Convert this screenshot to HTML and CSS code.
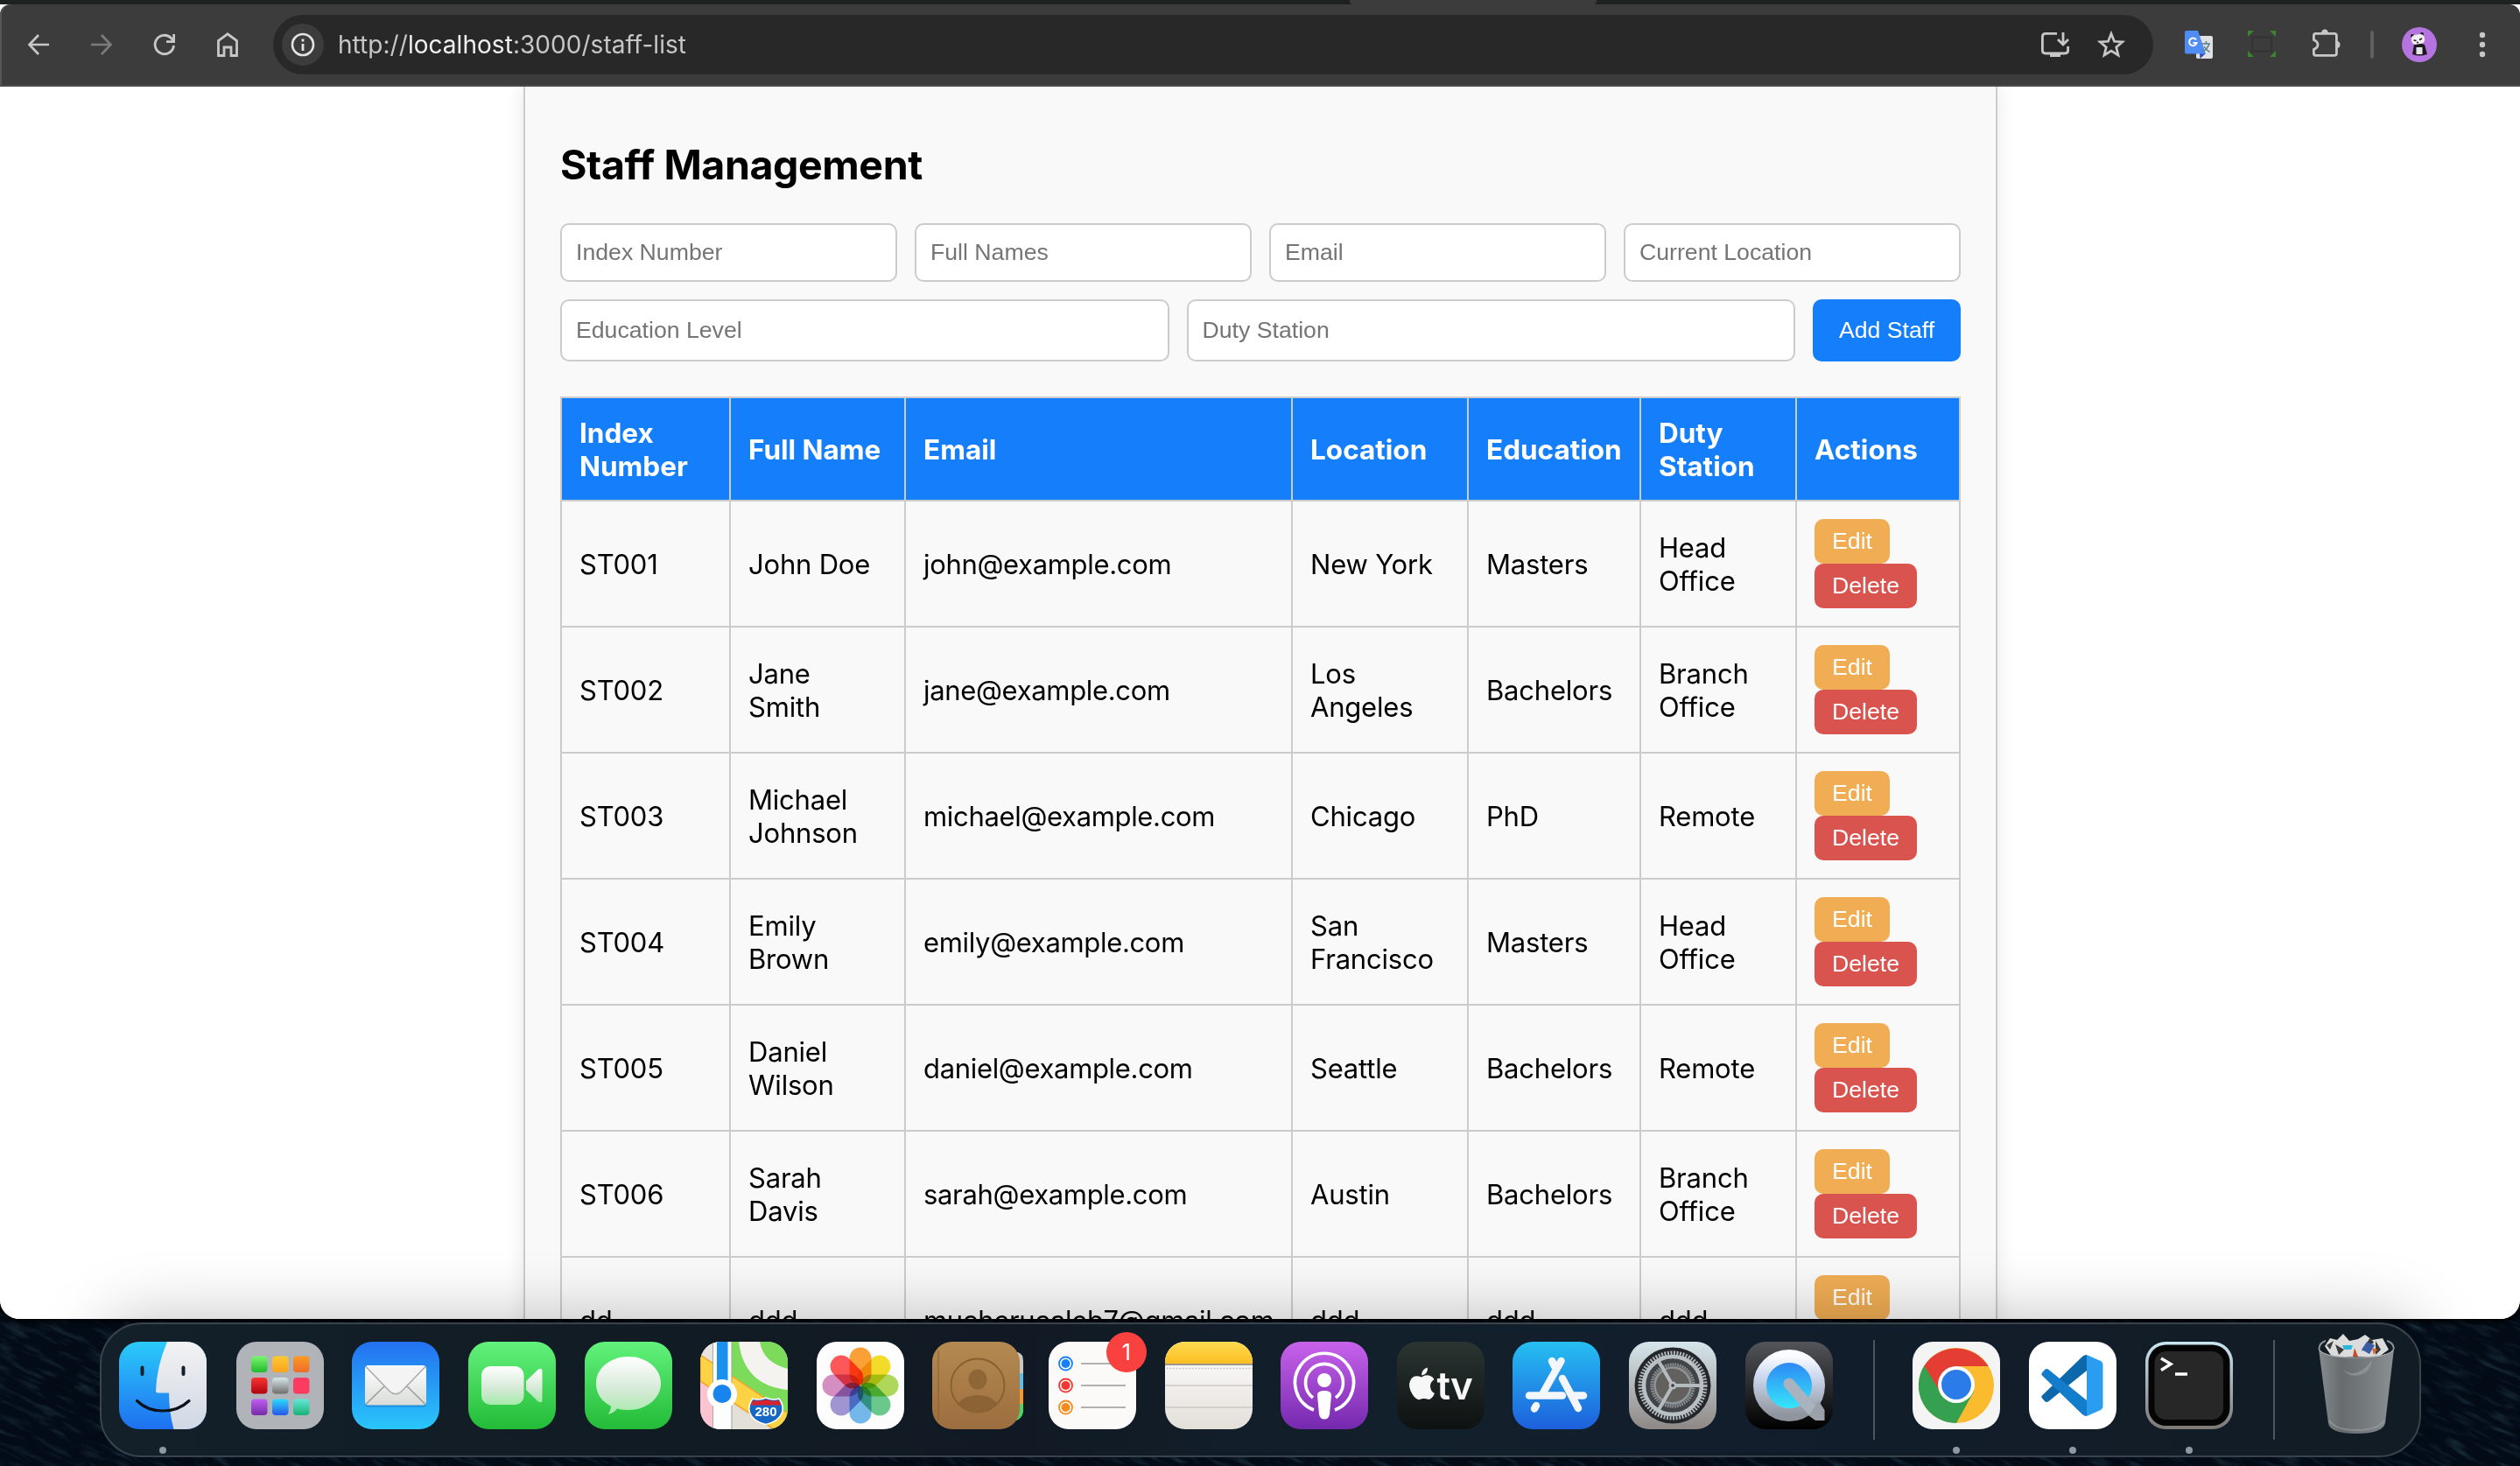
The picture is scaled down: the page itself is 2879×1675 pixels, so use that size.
FILE: index.html
```html
<!DOCTYPE html>
<html lang="en">
<head>
<meta charset="utf-8">
<title>Staff Management</title>
<link rel="stylesheet" href="styles.css">
</head>
<body>
<svg class="wallpaper" width="2879" height="175" viewBox="0 0 2879 175">
  <defs>
    <filter id="waves" x="0" y="0" width="100%" height="100%">
      <feTurbulence type="fractalNoise" baseFrequency="0.03 0.16" numOctaves="4" seed="8"/>
      <feColorMatrix values="0 0 0 0 .12  0 0 0 0 .28  0 0 0 0 .38  1.6 1.2 0 0 -1.35"/>
    </filter>
  </defs>
  <g transform="rotate(24 1440 87)"><rect x="-200" y="-800" width="3300" height="1800" filter="url(#waves)" opacity=".26"/></g>
</svg>

<div class="window">
  <div class="tabstrip"><div class="active-tab"></div></div>
  <div class="toolbar">
    <svg class="tool" viewBox="24 31 40 40"><path d="M56 51H34M44 40L33.500 51L44 62" fill="none" stroke="#c7c7c7" stroke-width="2.700"/></svg>
    <svg class="tool" viewBox="96 31 40 40"><path d="M104 51H126M116 40L126.500 51L116 62" fill="none" stroke="#7b7b7b" stroke-width="2.700"/></svg>
    <svg class="tool" viewBox="168 31 40 40"><path d="M198.500 52A10.700 10.700 0 1 1 195.500 43.500L198 46.500M198.600 39V47.600H190" fill="none" stroke="#c7c7c7" stroke-width="2.800"/></svg>
    <svg class="tool" viewBox="240 31 40 40"><path d="M249.500 63.500V46.500L260 38.800L270.500 46.500V63.500H264V54H256V63.500Z" fill="none" stroke="#c7c7c7" stroke-width="2.800"/></svg>
    <div class="omnibox">
      <div class="site-info"><svg viewBox="322 27 48 48"><circle cx="346" cy="51" r="12" fill="none" stroke="#e3e3e3" stroke-width="2.600"/><path d="M346 50V58M346 44.500V47.500" stroke="#e3e3e3" stroke-width="2.800"/></svg></div>
      <div class="url">http://<b>localhost</b>:3000/staff-list</div>
      <svg class="tool" viewBox="2328 31 40 40"><path d="M2350 38.400H2337Q2333.400 38.400 2333.400 42V57.500Q2333.400 61 2337 61H2359Q2362.600 61 2362.600 57.500V53" fill="none" stroke="#c7c7c7" stroke-width="2.800"/><path d="M2342 61H2354V65H2342Z" fill="#c7c7c7"/><path d="M2357 37V50M2351 45L2357 51L2363 45" fill="none" stroke="#c7c7c7" stroke-width="2.800"/></svg>
      <svg class="tool" viewBox="2392 31 40 40"><path d="M2412 38.500L2415.500 47.300L2424.800 47.900L2417.700 53.900L2420 63L2412 58L2404 63L2406.300 53.900L2399.200 47.900L2408.500 47.300Z" fill="none" stroke="#c7c7c7" stroke-width="2.700"/></svg>
    </div>
    <svg class="tool" viewBox="2492 31 40 40">
      <rect x="2509" y="41" width="19" height="26" rx="2" fill="#dfe1e3"/>
      <path d="M2513 61H2520L2513.500 67Z" fill="#3449b5"/>
      <path d="M2498 35H2511L2520 61.500H2498Q2496 61.500 2496 59.500V37Q2496 35 2498 35Z" fill="#4f8df5"/>
      <path d="M2509 45.500A4.300 4.300 0 1 0 2509.600 49H2505.500" fill="none" stroke="#fff" stroke-width="2"/>
      <path d="M2516 50H2525M2520.500 47V50M2524 50Q2522 56 2516.500 59M2518 53Q2520 57 2524.500 59.500" fill="none" stroke="#5b7f8c" stroke-width="1.500"/>
    </svg>
    <svg class="tool" viewBox="2564 31 40 40"><rect x="2573" y="42.500" width="22" height="16" fill="#3c3c3c" stroke="#343434" stroke-width="2.500"/><path d="M2568 35h7l-7 7zM2600 35v7l-7-7zM2568 65v-7l7 7zM2600 65h-7l7-7z" fill="#39852f"/></svg>
    <svg class="tool" viewBox="2636 31 40 40"><path d="M2643.400 40.500Q2643.400 38.400 2645.500 38.400H2667Q2669.400 38.400 2669.400 40.500V61Q2669.400 63.400 2667 63.400H2645.500Q2643.400 63.400 2643.400 61V56.500Q2648 54.500 2648 51Q2648 47.500 2643.400 45.500Z" fill="none" stroke="#c7c7c7" stroke-width="2.800"/><path d="M2652 38a4 4.500 0 0 1 8 0zM2669.500 47a4 4 0 0 1 0 8z" fill="#c7c7c7"/></svg>
    <div class="divider"></div>
    <svg class="tool avatar" viewBox="2744 31 40 40"><circle cx="2764" cy="51" r="20" fill="#b674e0"/><path d="M2758 51Q2764 48 2770 51L2773 62Q2764 65 2756 62Z" fill="#1c191d"/><path d="M2760.500 54h7v8h-7z" fill="#e9e4ea"/><circle cx="2756" cy="41" r="2" fill="#1c191d"/><circle cx="2767" cy="39" r="2" fill="#1c191d"/><rect x="2755" y="39.500" width="15" height="11" rx="4.500" fill="#f1eef2" transform="rotate(-10 2762 45)"/><path d="M2757.500 46l3 .5M2764 45.500l3-1.500M2761 48.500h2" stroke="#1c191d" stroke-width="1.400"/></svg>
    <svg class="tool" viewBox="2816 31 40 40"><g fill="#c7c7c7"><circle cx="2836" cy="40" r="3.200"/><circle cx="2836" cy="51" r="3.200"/><circle cx="2836" cy="62" r="3.200"/></g></svg>
  </div>

  <main class="viewport">
    <section class="panel">
      <h2>Staff Management</h2>
      <form class="staff-form">
        <input placeholder="Index Number"><input placeholder="Full Names"><input placeholder="Email"><input placeholder="Current Location">
        <input class="tall" placeholder="Education Level"><input class="tall" placeholder="Duty Station"><button type="button" class="add">Add Staff</button>
      </form>
      <table>
        <colgroup><col class="c1"><col class="c2"><col class="c3"><col class="c4"><col class="c5"><col class="c6"><col class="c7"></colgroup>
        <thead><tr><th>Index Number</th><th>Full Name</th><th>Email</th><th>Location</th><th>Education</th><th>Duty Station</th><th>Actions</th></tr></thead>
        <tbody>
          <tr><td>ST001</td><td>John Doe</td><td class="email">john@example.com</td><td>New York</td><td>Masters</td><td>Head Office</td><td class="actions"><button class="edit">Edit</button><button class="delete">Delete</button></td></tr>
          <tr><td>ST002</td><td>Jane Smith</td><td class="email">jane@example.com</td><td>Los Angeles</td><td>Bachelors</td><td>Branch Office</td><td class="actions"><button class="edit">Edit</button><button class="delete">Delete</button></td></tr>
          <tr><td>ST003</td><td>Michael Johnson</td><td class="email">michael@example.com</td><td>Chicago</td><td>PhD</td><td>Remote</td><td class="actions"><button class="edit">Edit</button><button class="delete">Delete</button></td></tr>
          <tr><td>ST004</td><td>Emily Brown</td><td class="email">emily@example.com</td><td>San Francisco</td><td>Masters</td><td>Head Office</td><td class="actions"><button class="edit">Edit</button><button class="delete">Delete</button></td></tr>
          <tr><td>ST005</td><td>Daniel Wilson</td><td class="email">daniel@example.com</td><td>Seattle</td><td>Bachelors</td><td>Remote</td><td class="actions"><button class="edit">Edit</button><button class="delete">Delete</button></td></tr>
          <tr><td>ST006</td><td>Sarah Davis</td><td class="email">sarah@example.com</td><td>Austin</td><td>Bachelors</td><td>Branch Office</td><td class="actions"><button class="edit">Edit</button><button class="delete">Delete</button></td></tr>
          <tr><td>dd</td><td>ddd</td><td class="email">mucherucaleb7@gmail.com</td><td>ddd</td><td>ddd</td><td>ddd</td><td class="actions"><button class="edit">Edit</button><button class="delete">Delete</button></td></tr>
        </tbody>
      </table>
    </section>
    <div class="dock-shadow"></div>
  </main>
</div>

<svg width="0" height="0" class="defs">
  <defs>
    <clipPath id="sq"><rect width="100" height="100" rx="23"/></clipPath>
    <linearGradient id="blueF" x2="0" y2="1"><stop stop-color="#2bcbfa"/><stop offset="1" stop-color="#1e6ff0"/></linearGradient>
    <linearGradient id="whiteF" x2="0" y2="1"><stop stop-color="#f3f2f3"/><stop offset="1" stop-color="#cfd8e4"/></linearGradient>
    <linearGradient id="mailG" x2="0" y2="1"><stop stop-color="#2371f1"/><stop offset="1" stop-color="#2ac6fb"/></linearGradient>
    <linearGradient id="greenG" x2="0" y2="1"><stop stop-color="#62f27c"/><stop offset="1" stop-color="#23bb37"/></linearGradient>
    <linearGradient id="paper" x2="0" y2="1"><stop stop-color="#fff"/><stop offset="1" stop-color="#d9dcd9"/></linearGradient>
    <linearGradient id="bubble" x2="0" y2="1"><stop stop-color="#fff"/><stop offset=".6" stop-color="#d3e9d4"/><stop offset="1" stop-color="#a6ebaa"/></linearGradient>
    <linearGradient id="brown" x2="0" y2="1"><stop stop-color="#b58a51"/><stop offset="1" stop-color="#9c6d3e"/></linearGradient>
    <linearGradient id="yel" x2="0" y2="1"><stop stop-color="#fedb50"/><stop offset="1" stop-color="#fbbf22"/></linearGradient>
    <linearGradient id="cream" x2="0" y2="1"><stop stop-color="#fff"/><stop offset="1" stop-color="#e3dfd9"/></linearGradient>
    <linearGradient id="purp" x2="0" y2="1"><stop stop-color="#c862ec"/><stop offset="1" stop-color="#7429ae"/></linearGradient>
    <linearGradient id="tvG" x2="0" y2="1"><stop stop-color="#2a3532"/><stop offset="1" stop-color="#0e1111"/></linearGradient>
    <linearGradient id="storeG" x2="0" y2="1"><stop stop-color="#26bff2"/><stop offset="1" stop-color="#1d5fdc"/></linearGradient>
    <linearGradient id="setG" x2="0" y2="1"><stop stop-color="#d6e6ec"/><stop offset="1" stop-color="#8e8885"/></linearGradient>
    <linearGradient id="qtBg" x2="0" y2="1"><stop stop-color="#53555a"/><stop offset="1" stop-color="#000"/></linearGradient>
    <linearGradient id="qtRing" x2="0" y2="1"><stop stop-color="#fbfcff"/><stop offset=".35" stop-color="#cdd8ef"/><stop offset="1" stop-color="#8f959e"/></linearGradient>
    <linearGradient id="qtIn" x2="0" y2="1"><stop stop-color="#2d7bf3"/><stop offset="1" stop-color="#38f3fb"/></linearGradient>
    <linearGradient id="termG" x2="0" y2="1"><stop stop-color="#c9e6f2"/><stop offset="1" stop-color="#7d7774"/></linearGradient>
    <linearGradient id="bin" x2="1"><stop stop-color="#8f9497"/><stop offset=".3" stop-color="#6d7174"/><stop offset=".65" stop-color="#7e8386"/><stop offset="1" stop-color="#94989a"/></linearGradient>
    <linearGradient id="t1" x2="0" y2="1"><stop stop-color="#7df56e"/><stop offset="1" stop-color="#1fbb2c"/></linearGradient>
    <linearGradient id="t2" x2="0" y2="1"><stop stop-color="#fcc931"/><stop offset="1" stop-color="#fba21c"/></linearGradient>
    <linearGradient id="t3" x2="0" y2="1"><stop stop-color="#fa9a23"/><stop offset="1" stop-color="#ef6c2a"/></linearGradient>
    <linearGradient id="t4" x2="0" y2="1"><stop stop-color="#f93431"/><stop offset="1" stop-color="#b10410"/></linearGradient>
    <linearGradient id="t5" x2="0" y2="1"><stop stop-color="#d8e8ee"/><stop offset="1" stop-color="#6f6d6c"/></linearGradient>
    <linearGradient id="t7" x2="0" y2="1"><stop stop-color="#c15ef0"/><stop offset="1" stop-color="#752bab"/></linearGradient>
    <linearGradient id="t8" x2="0" y2="1"><stop stop-color="#2edafb"/><stop offset="1" stop-color="#2456ea"/></linearGradient>
    <linearGradient id="t9" x2="0" y2="1"><stop stop-color="#66e6d8"/><stop offset="1" stop-color="#17b177"/></linearGradient>
  </defs>
</svg>

<nav class="dock">
  <div class="app running finder"><svg viewBox="0 0 100 100"><g clip-path="url(#sq)"><rect width="100" height="100" fill="url(#blueF)"/><path d="M55 0Q43 28 42 56Q42 58.500 44.500 58.500H57Q57 80 62.500 100H100V0Z" fill="url(#whiteF)"/></g><path d="M26.500 29.500V37M73.500 29.500V37" stroke="#12202c" stroke-width="4" stroke-linecap="round"/><path d="M20.500 67.500Q32 79 50 79T80 67.500" fill="none" stroke="#0c1219" stroke-width="3.200" stroke-linecap="round"/></svg></div>
  <div class="app"><svg viewBox="0 0 100 100"><rect width="100" height="100" rx="23" fill="#b0b4b8"/><rect x="17" y="16.500" width="18.500" height="18.500" rx="4" fill="url(#t1)"/><rect x="41" y="16.500" width="18.500" height="18.500" rx="4" fill="url(#t2)"/><rect x="65" y="16.500" width="18.500" height="18.500" rx="4" fill="url(#t3)"/><rect x="17" y="41" width="18.500" height="18.500" rx="4" fill="url(#t4)"/><rect x="41" y="41" width="18.500" height="18.500" rx="4" fill="url(#t5)"/><rect x="65" y="41" width="18.500" height="18.500" rx="4" fill="#fb3c60"/><rect x="17" y="65.500" width="18.500" height="18.500" rx="4" fill="url(#t7)"/><rect x="41" y="65.500" width="18.500" height="18.500" rx="4" fill="url(#t8)"/><rect x="65" y="65.500" width="18.500" height="18.500" rx="4" fill="url(#t9)"/></svg></div>
  <div class="app"><svg viewBox="0 0 100 100"><rect width="100" height="100" rx="23" fill="url(#mailG)"/><rect x="15" y="28.500" width="70" height="46" rx="4" fill="#0d4fb0" opacity=".35"/><rect x="15" y="27" width="70" height="45.500" rx="4" fill="url(#paper)"/><path d="M16.500 71L37 51M83.500 71L63 51" stroke="#9b9b9b" stroke-width="1.500"/><path d="M16 28.500L43 56.500Q50 63 57 56.500L84 28.500" fill="#f4f4f4" stroke="#a9a9a9" stroke-width="1.500"/></svg></div>
  <div class="app"><svg viewBox="0 0 100 100"><rect width="100" height="100" rx="23" fill="url(#greenG)"/><rect x="15" y="28" width="48.500" height="44" rx="10" fill="url(#bubble)"/><path d="M66 45L80 31.500Q84.500 29 84.500 34V66Q84.500 71 80 68.500L66 55Z" fill="url(#bubble)"/></svg></div>
  <div class="app"><svg viewBox="0 0 100 100"><rect width="100" height="100" rx="23" fill="url(#greenG)"/><path d="M50 17C71 17 87 30.500 87 47.500S71 78 50 78Q43 78 37 76.500Q33 81.500 26.500 83Q30 78.500 30 73.500Q13 65 13 47.500C13 30.500 29 17 50 17Z" fill="url(#bubble)"/></svg></div>
  <div class="app"><svg viewBox="0 0 100 100"><g clip-path="url(#sq)"><rect width="100" height="100" fill="#e3e0d8"/><path d="M36 0H100V84L36 40Z" fill="#7ddb5c"/><path d="M44 0Q50 50 100 55V31Q72 24 68 0Z" fill="#f4f3ef"/><path d="M0 0H14V26L0 15Z" fill="#e7e5e0"/><path d="M0 46L14 52V100H0Z" fill="#fcc3d0"/><path d="M0 15L100 82V100H84L0 45Z" fill="#fcd344" stroke="#f5a42b" stroke-width="1.500"/><rect x="14.500" width="21" height="100" fill="#fdfdfd"/><path d="M14.500 0V100M36 0V100" stroke="#a9a9a0" stroke-width="1"/><rect x="19" width="12.500" height="50" fill="#1a91ee"/></g><circle cx="25" cy="60" r="17" fill="#fff"/><circle cx="25" cy="59.500" r="10.500" fill="#1884ee"/><path d="M60 65Q67 67.500 75 64Q83 67.500 90 65Q96 73 93.500 81Q90 91 75 94.500Q60 91 56.500 81Q54 73 60 65Z" fill="#1768c4" stroke="#fff" stroke-width="1.600"/><path d="M60 67Q67 69 75 66Q83 69 90 67L92.500 72.500H57.500Z" fill="#d8232d"/><text x="75" y="85" class="route">280</text></svg></div>
  <div class="app"><svg viewBox="0 0 100 100"><rect width="100" height="100" rx="23" fill="#fdfdfd"/><g class="petals"><rect x="37.500" y="6.500" width="25" height="43" rx="12.500" fill="#fb9a2c"/><rect x="37.500" y="6.500" width="25" height="43" rx="12.500" fill="#f3da1d" transform="rotate(45 50 50)"/><rect x="37.500" y="6.500" width="25" height="43" rx="12.500" fill="#abd651" transform="rotate(90 50 50)"/><rect x="37.500" y="6.500" width="25" height="43" rx="12.500" fill="#62c587" transform="rotate(135 50 50)"/><rect x="37.500" y="6.500" width="25" height="43" rx="12.500" fill="#6bb3ea" transform="rotate(180 50 50)"/><rect x="37.500" y="6.500" width="25" height="43" rx="12.500" fill="#9c8ed1" transform="rotate(225 50 50)"/><rect x="37.500" y="6.500" width="25" height="43" rx="12.500" fill="#d289bd" transform="rotate(270 50 50)"/><rect x="37.500" y="6.500" width="25" height="43" rx="12.500" fill="#fd4f50" transform="rotate(315 50 50)"/></g></svg></div>
  <div class="app"><svg viewBox="0 0 100 100"><path d="M90 12H98Q104 14 104 22V36H90Z" fill="#c9c7c3"/><path d="M90 36H104V54H90Z" fill="#5bbdf0"/><path d="M90 54H104V71H90Z" fill="#f79a2b"/><path d="M90 71H104V80Q103 88 94 91H90Z" fill="#4cd364"/><rect width="100" height="100" rx="23" fill="url(#brown)"/><path d="M7 10V90" stroke="#8c6436" stroke-width="1.200"/><g stroke="#86602f" stroke-width="1.800"><circle cx="52" cy="50" r="30.500" fill="none"/><path d="M30 71Q36 61 52 61T74 71Q65 80.500 52 80.500T30 71Z" fill="#8c6335" stroke="none"/><ellipse cx="52" cy="43" rx="10.500" ry="11.500" fill="#8f6737" stroke="none"/></g></svg></div>
  <div class="app"><svg viewBox="0 0 100 100"><rect width="100" height="100" rx="23" fill="#fbfaf8"/><g fill="none" stroke-width="1.800"><circle cx="19.500" cy="25" r="7.500" stroke="#187ff5"/><circle cx="19.500" cy="50" r="7.500" stroke="#f23733"/><circle cx="19.500" cy="75" r="7.500" stroke="#f28c1d"/></g><circle cx="19.500" cy="25" r="5" fill="#187ff5"/><circle cx="19.500" cy="50" r="5" fill="#f23733"/><circle cx="19.500" cy="75" r="5" fill="#f28c1d"/><path d="M37 25H88M37 50H88M37 75H88" stroke="#b1b1b4" stroke-width="1.800"/></svg><span class="badge">1</span></div>
  <div class="app"><svg viewBox="0 0 100 100"><g clip-path="url(#sq)"><rect width="100" height="100" fill="url(#cream)"/><rect width="100" height="25" fill="url(#yel)"/><path d="M0 26H100" stroke="#9d968b" stroke-width="2"/><path d="M2 30.500H100" stroke="#c2bfbb" stroke-width="1.600" stroke-dasharray="1.600 2"/><path d="M0 50H100M0 75H100" stroke="#cbc9c8" stroke-width="1.600"/></g></svg></div>
  <div class="app"><svg viewBox="0 0 100 100"><rect width="100" height="100" rx="23" fill="url(#purp)"/><g fill="none" stroke="#fff" stroke-width="3.600"><path d="M38 78A33.500 33.500 0 1 1 62 78"/><path d="M37 64A21.500 21.500 0 1 1 63 64"/></g><circle cx="50" cy="44" r="8" fill="#fff"/><path d="M42 61Q42 56 50 56T58 61L56 83Q55 88.500 50 88.500T44 83Z" fill="#fff"/></svg></div>
  <div class="app"><svg viewBox="0 0 100 100"><rect width="100" height="100" rx="23" fill="url(#tvG)"/><path d="M28 40.500Q33 37 38 39Q41 40 42.500 43Q38 46 38 51Q38.500 57 43 59Q40 66 36 66Q33 64.500 29 65Q26 66.500 24 66Q19 64 15.500 56Q12 47 17 41.500Q21 37.500 28 40.500ZM28 38.500Q28 31.500 35 29.500Q35.500 37 28 38.500Z" fill="#f7f7f7"/><text x="45.500" y="66" class="tv">tv</text></svg></div>
  <div class="app"><svg viewBox="0 0 100 100"><rect width="100" height="100" rx="23" fill="url(#storeG)"/><g stroke="#f3f7fc" stroke-width="8.500" stroke-linecap="round"><path d="M45 22L48 28M19 61.500H57M68 61.500H81M57 42L75 76M27 73L25 76.500M55.500 22L34 60"/></g></svg></div>
  <div class="app"><svg viewBox="0 0 100 100"><rect width="100" height="100" rx="23" fill="url(#setG)"/><circle cx="50" cy="50" r="43.500" fill="#23262a"/><circle cx="50" cy="50" r="37" fill="none" stroke="#aeb5b8" stroke-width="5" stroke-dasharray="2 1.500"/><circle cx="50" cy="50" r="33" fill="#41454a" stroke="#b9c0c3" stroke-width="4.500"/><circle cx="50" cy="50" r="24" fill="#55585b" stroke="#8d9294" stroke-width="3.500" stroke-dasharray="1.600 1.200"/><circle cx="50" cy="50" r="20.500" fill="#63615e" stroke="#8f9496" stroke-width="2.500"/><path d="M50 50H82M50 50L34 22.500M50 50L34 77.500" stroke="#b5bcbf" stroke-width="4"/><circle cx="50" cy="50" r="4.500" fill="#b5bcbf"/><circle cx="50" cy="50" r="1.800" fill="#333"/></svg></div>
  <div class="app"><svg viewBox="0 0 100 100"><rect width="100" height="100" rx="23" fill="url(#qtBg)"/><circle cx="50" cy="50" r="33.500" fill="url(#qtIn)" stroke="url(#qtRing)" stroke-width="15"/><path d="M50 48L76 78" stroke="#a9b2bf" stroke-width="13" stroke-linecap="round"/><path d="M72 84L84 68L90.500 78V90H80Z" fill="#9ba1a9"/></svg></div>
  <div class="rule"></div>
  <div class="app running"><svg viewBox="0 0 100 100"><rect width="100" height="100" rx="23" fill="#f4f4f5"/><circle cx="50" cy="50" r="43" fill="#fabb2e"/><path d="M50 50L13.500 27A43 43 0 0 0 50 93L70 57Z" fill="#35a150"/><path d="M13.500 27.500A43 43 0 0 1 86.500 28H50V50L31 57Z" fill="#e43e34"/><circle cx="50" cy="49" r="21" fill="#fff"/><circle cx="50" cy="49" r="17" fill="#2b7be9"/></svg></div>
  <div class="app running"><svg viewBox="0 0 100 100"><rect width="100" height="100" rx="23" fill="#fff"/><path d="M66 15V33L22 68.500Q20 69.500 18 68L15 64.500Q13.500 62.500 15.500 61L61 17Q63 15 66 15Z" fill="#0c68ab"/><path d="M66 85V67L22 31.500Q20 30.500 18 32L15 35.500Q13.500 37.500 15.500 39L61 83Q63 85 66 85Z" fill="#137ccb"/><path d="M66 15L82 22Q84.500 23.500 84.500 26V74Q84.500 76.500 82 78L66 85Z" fill="#2b9df0"/></svg></div>
  <div class="app running"><svg viewBox="0 0 100 100"><rect width="100" height="100" rx="23" fill="url(#termG)"/><rect x="3.500" y="3.500" width="93" height="92.500" rx="20" fill="#050505"/><rect x="10.500" y="11" width="78.500" height="78" rx="13" fill="#272727"/><path d="M18 19L29 25.500L18 32.500M34 37H48" fill="none" stroke="#fff" stroke-width="3.400"/></svg></div>
  <div class="rule"></div>
  <div class="trash"><svg viewBox="0 0 90 118"><path d="M8 16L14 7L22 9L29 2L36 10L46 8L54 3L62 9L74 7L81 20L70 28H16Z" fill="#dcdcdc"/><path d="M20 14L30 20L24 26ZM50 22L60 6L64 12ZM66 10L72 20L66 26ZM10 15L18 10L14 20Z" fill="#3a3a3d"/><path d="M28 15H40L38 20H30Z" fill="#2bb5dc"/><path d="M56 11L65 15L59 25L50 20Z" fill="#3b5ba5"/><path d="M42 18L46 28L40 28Z" fill="#c94a2b"/><path d="M62 18L68 20L64 26Z" fill="#d0642c"/><path d="M1 19Q5 29 44 29T87 19L77 104Q74 116 44 116T12 104Z" fill="url(#bin)" opacity=".93"/><path d="M1.500 19Q2 12 9 10M87 19Q86 12 79 10" fill="none" stroke="#8a9094" stroke-width="2"/><path d="M1 19Q5 29 44 29T87 19" fill="none" stroke="#a9adaf" stroke-width="1.200"/><path d="M28 42Q44 56 62 32Q60 46 48 49T28 42Z" fill="#a3a7aa" opacity=".5"/><path d="M13 101Q20 112 44 112T76 101" fill="none" stroke="#a5a9ab" stroke-width="2" opacity=".5"/></svg></div>
</nav>
</body>
</html>
```
FILE: styles.css
```css
* { box-sizing: border-box; }
body {
  margin: 0;
  width: 2879px;
  height: 1675px;
  overflow: hidden;
  position: relative;
  background: #020b16;
  font-family: Inter, "Liberation Sans", sans-serif;
}
.defs { position: absolute; }
.wallpaper { position: absolute; left: 0; bottom: 0; }

.window {
  position: relative;
  width: 2879px;
  height: 1507px;
  border-radius: 0 0 22px 22px;
  overflow: hidden;
  background: #fff;
  box-shadow: 0 0 6px 3px #000;
}
.tabstrip { height: 5px; background: #1e2120; }
.active-tab { width: 282px; height: 5px; margin-left: 1542px; background: #3c3c3c; border-radius: 0 0 4px 4px; }
.toolbar {
  height: 94px;
  display: flex;
  align-items: center;
  gap: 32px;
  padding-left: 24px;
  background: #3c3c3c;
  border-bottom: 2px solid #4a4a4a;
  border-radius: 12px 12px 0 0;
  box-shadow: inset 2px 0 0 #555;
}
.tool { width: 40px; height: 40px; flex: none; display: block; }
.omnibox {
  width: 2148px;
  height: 68px;
  flex: none;
  display: flex;
  align-items: center;
  padding: 0 28px 0 10px;
  gap: 24px;
  border-radius: 34px;
  background: #282828;
}
.site-info { width: 48px; height: 48px; border-radius: 50%; background: #3c3c3c; }
.site-info svg { display: block; width: 48px; height: 48px; }
.url { flex: 1; margin-left: -8px; font-size: 28px; line-height: 40px; letter-spacing: .04px; color: #c7c7c7; }
.url b { font-weight: 400; color: #f0f0f0; }
.divider { width: 4px; height: 32px; border-radius: 2px; background: #5f5f5f; }

.viewport { height: 1408px; position: relative; overflow: hidden; background: #fff; }
.panel {
  width: 1684px;
  height: 1600px;
  margin-left: 598px;
  padding: 61px 40px 0;
  background: #f9f9f9;
  border: 2px solid #ccc;
  border-width: 0 2px;
  box-shadow: 0 0 20px rgba(0, 0, 0, .1);
}
h2 { margin: 0 0 39px; font-size: 46.500px; line-height: 56px; font-weight: 700; letter-spacing: -.4px; color: #000; }

.staff-form { display: flex; flex-wrap: wrap; gap: 20px; margin-bottom: 40px; }
.staff-form input {
  width: 385px;
  height: 67px;
  padding: 0 16px;
  border: 2px solid #ccc;
  border-radius: 10px;
  background: #fff;
  font: 26.670px "Liberation Sans", Arial, sans-serif;
}
.staff-form input::placeholder { color: #757575; }
.staff-form .tall { width: 695.500px; height: 71px; }
button { font: 26.670px "Liberation Sans", Arial, sans-serif; border: 0; color: #fff; padding: 0; }
.add { width: 169px; height: 71px; border-radius: 10px; background: #157efb; }

table { width: 1600px; table-layout: fixed; border-collapse: separate; border-spacing: 0; border-right: 2px solid #ccc; }
.c1 { width: 193px; } .c2 { width: 200px; } .c3 { width: 442px; } .c4 { width: 201px; }
.c5 { width: 197px; } .c6 { width: 178px; } .c7 { width: 187px; }
th, td {
  border: 2px solid #ccc;
  border-width: 2px 0 0 2px;
  padding: 1px 20px 0;
  text-align: left;
  vertical-align: middle;
  line-height: 38px;
  color: #000;
}
th { height: 118px; padding-right: 10px; background: #157efb; color: #fff; font-size: 31.500px; font-weight: 700; }
td { height: 144px; font-size: 31px; letter-spacing: -.2px; }
.email { padding-right: 8px; letter-spacing: -.33px; }
.actions { padding: 0 0 0 20px; }
.actions button { display: block; height: 51px; padding-bottom: 1px; border-radius: 10px; }
.edit { width: 86px; background: #f0ad54; }
.delete { width: 117px; background: #d9534f; }

.dock-shadow {
  position: absolute;
  left: 115px;
  top: 1412px;
  width: 2651px;
  height: 154px;
  border-radius: 50px;
  box-shadow: 0 0 80px rgba(0, 0, 0, .28);
}

.dock {
  position: absolute;
  left: 114px;
  top: 1511px;
  width: 2652px;
  height: 154px;
  display: flex;
  padding: 20px 0 0 20px;
  gap: 32.600px;
  border: 2px solid #3a434c;
  border-radius: 48px;
  background: linear-gradient(90deg, #13202a, #111b23 25%, #111a24 40%, #12202c 55%, #121d2b 75%, #121c24);
}
.app { position: relative; width: 100px; height: 100px; flex: none; }
.app svg { display: block; width: 100px; height: 100px; overflow: visible; }
.finder { margin-right: 1.200px; }
.running::after {
  content: "";
  position: absolute;
  left: 46px;
  top: 120px;
  width: 8px;
  height: 8px;
  border-radius: 50%;
  background: #8f98a2;
}
.badge {
  position: absolute;
  left: 66px;
  top: -11px;
  width: 46px;
  height: 46px;
  border-radius: 50%;
  background: #f9413f;
  color: #fff;
  font-size: 25px;
  line-height: 46px;
  text-align: center;
}
.petals rect { mix-blend-mode: multiply; opacity: .95; }
.petals { isolation: isolate; }
.route { font: 700 15px "Liberation Sans", sans-serif; fill: #fff; text-anchor: middle; }
.tv { font: 600 44px Inter, sans-serif; fill: #f7f7f7; letter-spacing: -1px; }
.rule { width: 2px; height: 114px; margin: -2px 10.800px 0 14px; background: #4b555f; flex: none; }
.trash { width: 90px; height: 118px; margin: -11px 0 0 5px; flex: none; }
.trash svg { display: block; width: 90px; height: 118px; }
```
